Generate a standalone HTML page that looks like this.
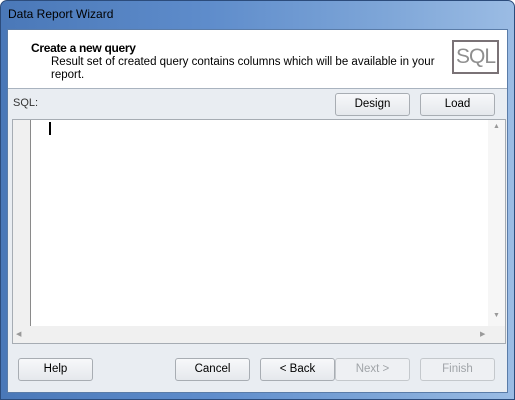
<!DOCTYPE html>
<html><head><style>
*{margin:0;padding:0;box-sizing:border-box}
body{width:515px;height:400px;overflow:hidden;background:#fff;font-family:"Liberation Sans",sans-serif;font-size:11px;color:#000;position:relative}
.frame{position:absolute;left:0;top:0;width:515px;height:400px;border-radius:7px 7px 0 0;background:linear-gradient(90deg,#4a78b8 0%,#5e8ccb 40%,#7ea6d8 75%,#9bbce4 100%);border:1px solid #2c4c7c}
.title{position:absolute;left:8px;top:7px;font-size:12px;color:#000}
.client{position:absolute;left:7px;top:29px;width:501px;height:364px;background:#e9edf2;border:1px solid #5a7ca8}
.head{position:absolute;left:0;top:0;width:499px;height:59px;background:#fff;border-bottom:1px solid #a9b3bf}
.h1{position:absolute;left:23px;top:11px;font-weight:bold;font-size:12px;letter-spacing:-0.3px}
.h2{position:absolute;left:43px;top:26px;width:400px;line-height:13px;font-size:11.5px}
.sql{position:absolute;left:444px;top:10px;width:47px;height:34px;border:2px solid #7a7276;color:#8f8f8f;font-size:21px;letter-spacing:-1px;text-align:center;line-height:30px;overflow:hidden}
.lbl{position:absolute;left:5px;top:67px;color:#333}
.btn{position:absolute;width:75px;height:23px;border:1px solid #a8adb3;border-radius:3px;background:linear-gradient(#f7f8fa,#e5e8ec);text-align:center;line-height:21px;font-size:11.5px}
.dis{color:#a0a4a8;border-color:#c4c8cc;background:#eef0f3}
.ed{position:absolute;left:4px;top:89px;width:494px;height:225px;border:1px solid #a6acb3;background:#fff}
.gut{position:absolute;left:0;top:0;width:18px;height:206px;background:#f0f0f0;border-right:1px solid #8a8a8a}
.vs{position:absolute;right:0;top:0;width:17px;height:206px;background:#f6f6f6}
.hs{position:absolute;left:0;bottom:0;width:492px;height:17px;background:#f0f0f0}
.cur{position:absolute;left:36px;top:2px;width:2px;height:13px;background:#000}
.ar{position:absolute;color:#999;font-size:7px}
</style></head><body>
<div class="frame"></div>
<div class="title">Data Report Wizard</div>
<div class="client">
 <div class="head">
  <div class="h1">Create a new query</div>
  <div class="h2">Result set of created query contains columns which will be available in your report.</div>
  <div class="sql">SQL</div>
 </div>
 <div class="lbl">SQL:</div>
 <div class="btn" style="left:327px;top:63px">Design</div>
 <div class="btn" style="left:412px;top:63px">Load</div>
 <div class="ed">
  <div class="gut"></div>
  <div class="cur"></div>
  <div class="vs"><span class="ar" style="left:5px;top:3px">▲</span><span class="ar" style="left:5px;top:192px">▼</span></div>
  <div class="hs"><span class="ar" style="left:3px;top:4px">◀</span><span class="ar" style="left:467px;top:4px">▶</span></div>
 </div>
 <div class="btn" style="left:10px;top:328px">Help</div>
 <div class="btn" style="left:167px;top:328px">Cancel</div>
 <div class="btn" style="left:252px;top:328px">&lt; Back</div>
 <div class="btn dis" style="left:327px;top:328px">Next &gt;</div>
 <div class="btn dis" style="left:412px;top:328px">Finish</div>
</div>
</body></html>
